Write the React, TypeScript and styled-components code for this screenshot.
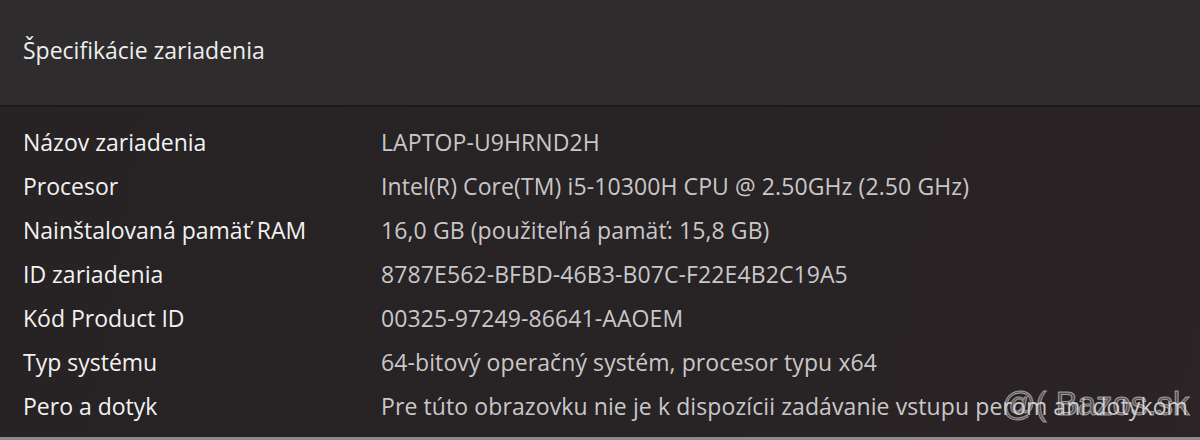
import React from 'react';
import styled, { createGlobalStyle } from 'styled-components';

const GlobalStyle = createGlobalStyle`
  html, body {
    margin: 0;
    padding: 0;
    background: #282325;
  }
  body {
    font-family: 'Open Sans', 'Noto Sans', sans-serif;
  }
`;

const specs: { label: string; value: string }[] = [
  { label: 'Názov zariadenia', value: 'LAPTOP-U9HRND2H' },
  { label: 'Procesor', value: 'Intel(R) Core(TM) i5-10300H CPU @ 2.50GHz (2.50 GHz)' },
  { label: 'Nainštalovaná pamäť RAM', value: '16,0 GB (použiteľná pamäť: 15,8 GB)' },
  { label: 'ID zariadenia', value: '8787E562-BFBD-46B3-B07C-F22E4B2C19A5' },
  { label: 'Kód Product ID', value: '00325-97249-86641-AAOEM' },
  { label: 'Typ systému', value: '64-bitový operačný systém, procesor typu x64' },
  { label: 'Pero a dotyk', value: 'Pre túto obrazovku nie je k dispozícii zadávanie vstupu perom ani dotykom' },
];

export default function App() {
  return (
    <>
      <GlobalStyle />
      <Panel>
        <Header>
          <Title>Špecifikácie zariadenia</Title>
        </Header>
        <Divider />
        <List>
          {specs.map((s) => (
            <Row key={s.label}>
              <Label>{s.label}</Label>
              <Value>{s.value}</Value>
            </Row>
          ))}
        </List>
        {/* watermark from the source photo, sits over the last row */}
        <Watermark>@( Bazos.sk</Watermark>
      </Panel>
    </>
  );
}

const Panel = styled.div`
  position: relative;
  width: 1200px;
  height: 440px;
  overflow: hidden;
  display: flex;
  flex-direction: column;
  background: linear-gradient(100deg, #272224 0%, #282325 70%, #2b2326 100%);
  border-bottom: 3px solid #8c8a8b;
  box-sizing: border-box;
`;

const Header = styled.div`
  height: 105px;
  display: flex;
  align-items: center;
  padding: 0 23px 6px;
  box-sizing: border-box;
  background: #2e2c2d;
`;

const Title = styled.h1`
  margin: 0;
  font-size: 23px;
  font-weight: 400;
  color: #eeeeee;
`;

const Divider = styled.div`
  height: 2px;
  background: #1b191a;
`;

const List = styled.div`
  display: flex;
  flex-direction: column;
  padding-top: 13px;
`;

const Row = styled.div`
  display: grid;
  grid-template-columns: 358px 1fr;
  align-items: center;
  height: 44px;
  padding-left: 23px;
`;

const Label = styled.span`
  font-size: 23px;
  color: #f2f2f2;
  white-space: nowrap;
`;

const Value = styled.span`
  font-size: 23px;
  color: #c9c7c8;
  letter-spacing: 0.1px;
  white-space: nowrap;
`;

const Watermark = styled.div`
  position: absolute;
  left: 1002px;
  bottom: 14px;
  white-space: nowrap;
  font-family: 'Liberation Sans', sans-serif;
  font-size: 33px;
  color: rgba(190, 190, 190, 0.28);
  -webkit-text-stroke: 1px rgba(235, 235, 235, 0.55);
  pointer-events: none;
`;
